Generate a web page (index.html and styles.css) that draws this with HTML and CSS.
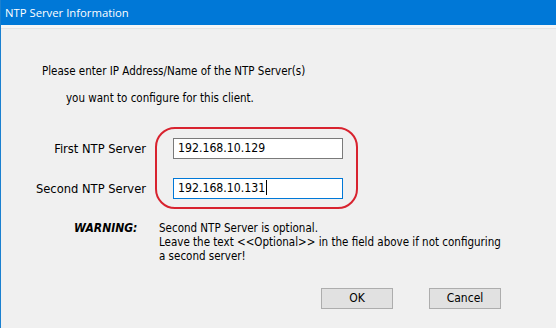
FILE: index.html
```html
<!DOCTYPE html>
<html>
<head>
<meta charset="utf-8">
<link rel="stylesheet" href="styles.css">
</head>
<body>
<div class="window">
  <div class="titlebar">NTP Server Information</div>
  <div class="content">
    <p class="intro intro1">Please enter IP Address/Name of the NTP Server(s)</p>
    <p class="intro intro2">you want to configure for this client.</p>
    <div class="fields">
      <div class="labels">
        <div class="label">First NTP Server</div>
        <div class="label">Second NTP Server</div>
      </div>
      <div class="highlight">
        <div class="input">192.168.10.129</div>
        <div class="input focused">192.168.10.131<span class="caret"></span></div>
      </div>
    </div>
    <div class="warning">
      <div class="warn-title">WARNING:</div>
      <div class="warn-text">Second NTP Server is optional.<br>Leave the text &lt;&lt;Optional&gt;&gt; in the field above if not configuring<br>a second server!</div>
    </div>
    <div class="buttons">
      <div class="btn">OK</div>
      <div class="btn">Cancel</div>
    </div>
  </div>
</div>
</body>
</html>
```

FILE: styles.css
```css
html, body {
  margin: 0;
  padding: 0;
  background: #f0f0f0;
}
.window {
  width: 556px;
  height: 328px;
  box-sizing: border-box;
  border-left: 1px solid #1a80d0;
  background: #f0f0f0;
  overflow: hidden;
  font-family: "DejaVu Sans Condensed", "DejaVu Sans", sans-serif;
  font-size: 11.5px;
  color: #000;
}
.titlebar {
  height: 25px;
  background: #0078d7;
  color: #fff;
  font-family: "Open Sans", "Noto Sans", sans-serif;
  font-size: 11.3px;
  line-height: 25px;
  padding-left: 5px;
  margin-left: -1px;
}
.content {
  border-top: 3px solid #f6f6f6;
  position: relative;
}
.content::before {
  content: "";
  display: block;
  height: 1px;
  background: #e6e4e4;
}
.intro {
  margin: 0;
  line-height: 14px;
}
.intro1 {
  margin-top: 35px;
  padding-left: 41px;
}
.intro2 {
  margin-top: 13px;
  padding-left: 65px;
}
.fields {
  display: flex;
  margin-top: 22px;
}
.labels {
  width: 145px;
  display: flex;
  flex-direction: column;
  align-items: flex-end;
  gap: 19px;
  padding-top: 11px;
  font-size: 12.8px;
}
.label {
  height: 21px;
  line-height: 21px;
}
.highlight {
  margin-left: 9px;
  width: 203px;
  height: 82px;
  box-sizing: border-box;
  border: 2px solid #d8232f;
  border-radius: 20px;
  padding: 9px 0 0 16px;
  display: flex;
  flex-direction: column;
  gap: 19px;
}
.input {
  width: 170px;
  height: 21px;
  box-sizing: border-box;
  border: 1px solid #7a7a7a;
  background: #fff;
  line-height: 19px;
  padding-left: 4px;
  font-size: 12.2px;
}
.input.focused {
  border-color: #0078d7;
}
.caret {
  display: inline-block;
  width: 1px;
  height: 15px;
  background: #000;
  vertical-align: -3px;
  margin-left: 1px;
}
.warning {
  display: flex;
  margin-top: 12px;
  line-height: 14px;
}
.warn-title {
  padding-left: 73px;
  box-sizing: border-box;
  width: 158px;
  font-weight: bold;
  font-style: italic;
  font-size: 12px;
}
.warn-text {
  flex: 1;
}
.buttons {
  display: flex;
  gap: 36px;
  margin-top: 25px;
  padding-left: 320px;
}
.btn {
  width: 72px;
  height: 21px;
  box-sizing: border-box;
  border: 1px solid #adadad;
  background: #e1e1e1;
  text-align: center;
  line-height: 19px;
  font-size: 12px;
}
```
